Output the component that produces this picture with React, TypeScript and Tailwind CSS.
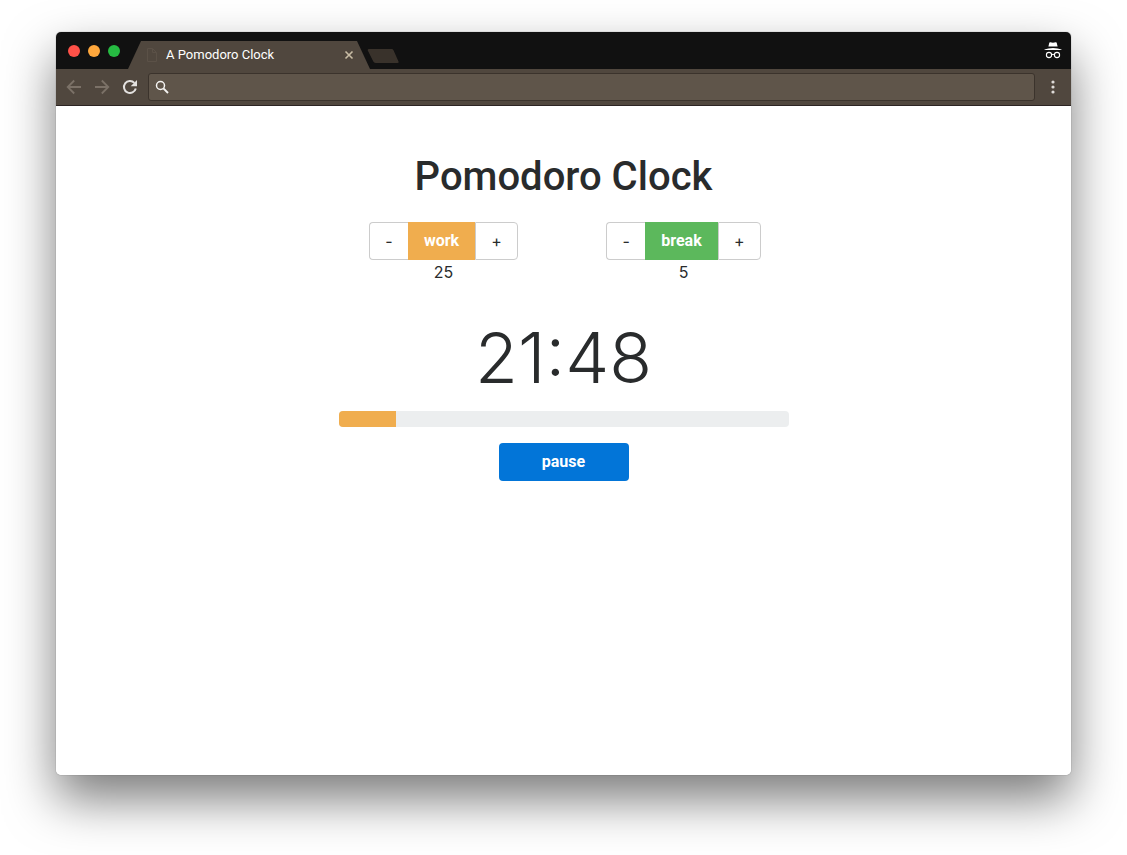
import { useState } from "react";

const font = "font-['Inter','Liberation_Sans',sans-serif]";

function TrafficLights() {
  return (
    <div className="flex h-full items-center gap-2 pl-3">
      <button aria-label="Close window" className="size-3 rounded-full bg-[#ff5148]" />
      <button aria-label="Minimize window" className="size-3 rounded-full bg-[#ffa73c]" />
      <button aria-label="Zoom window" className="size-3 rounded-full bg-[#26bb42]" />
    </div>
  );
}

function TabStrip() {
  return (
    <header className="flex h-[37px] items-end bg-[#111111] pr-2">
      <TrafficLights />
      <div className="ml-2 flex h-7 w-[242px] shrink-0 items-center bg-[#50473e] pr-4 pl-[18px] [clip-path:polygon(13px_0,229px_0,100%_100%,0_100%)]">
        <svg className="mr-2 h-[14px] w-3 shrink-0" viewBox="0 0 12 14" fill="none" stroke="#5b5147">
          <path d="M1.5 .5h5l4 4v9h-9z M6.5 .5v4h4" />
        </svg>
        <span className="flex-1 font-['Roboto',sans-serif] text-[13px] leading-4 whitespace-nowrap text-white">A Pomodoro Clock</span>
        <button aria-label="Close tab" className="flex size-[10px] items-center justify-center">
          <svg className="size-[10px]" viewBox="0 0 10 10" stroke="#c9bda5" strokeWidth="1.6">
            <path d="M1.5 1.5l7 7M8.5 1.5l-7 7" />
          </svg>
        </button>
      </div>
      <button aria-label="New tab" className="-ml-[3px] mb-[6px]">
        <svg className="h-[14px] w-8" viewBox="0 0 32 14">
          <path d="M2 0h22.5q1.5 0 2 1.2l5 11.3q.6 1.5-1 1.5H8.5q-1.5 0-2.2-1.4L.8 1.5Q.3 0 2 0z" fill="#39322b" />
        </svg>
      </button>
      <div className="flex h-full flex-1 items-center justify-end">
        <svg className="h-[18px] w-5" viewBox="0 0 20 18" fill="none">
          <path d="M6.3 .8q.2-.8 1-.6L10 .8l2.700-.6q.8-.2 1 .6l.9 3.700H5.400z" fill="#fff" />
          <path d="M1.5 7.5q3.500-1.600 8.500-1.600t8.500 1.600v.5h-17z" fill="#fff" />
          <circle cx="6" cy="13" r="2.6" stroke="#fff" strokeWidth="1.1" />
          <circle cx="14" cy="13" r="2.6" stroke="#fff" strokeWidth="1.1" />
          <path d="M8.6 12.7q1.400-1 2.800 0" stroke="#fff" strokeWidth="1.1" />
        </svg>
      </div>
    </header>
  );
}

function Toolbar() {
  return (
    <nav className="flex h-[37px] items-center border-b border-[#2c2423] bg-[#50473e] px-[10px]">
      <div className="flex items-center gap-3">
        <button aria-label="Back">
          <svg className="size-4" viewBox="0 0 16 16" fill="none" stroke="#7b7167" strokeWidth="1.8">
            <path d="M15 8H2M8.2 1.500L1.700 8l6.500 6.500" />
          </svg>
        </button>
        <button aria-label="Forward">
          <svg className="size-4" viewBox="0 0 16 16" fill="none" stroke="#7b7167" strokeWidth="1.8">
            <path d="M1 8h13M7.8 1.500L14.300 8l-6.500 6.500" />
          </svg>
        </button>
        <button aria-label="Reload">
          <svg className="size-4" viewBox="0 0 16 16" fill="none">
            <path d="M13.8 9.500A6 6 0 1 1 12.400 3.900" stroke="#e3e1df" strokeWidth="2" />
            <path d="M15 1v6.300H8.700z" fill="#e3e1df" />
          </svg>
        </button>
      </div>
      <label className="mx-[10px] flex h-7 flex-1 items-center gap-2 rounded-[3px] border border-[#3b332c] bg-[#5f554a] px-[6px]">
        <svg className="size-[14px] shrink-0" viewBox="0 0 14 14" fill="none" stroke="#f5f4f2">
          <circle cx="5.5" cy="5.5" r="4" strokeWidth="1.5" />
          <path d="M8.4 8.400l4.600 4.600" strokeWidth="1.9" />
        </svg>
        <input aria-label="Address and search" type="text" className="min-w-0 flex-1 bg-transparent text-sm text-white outline-none" />
      </label>
      <button aria-label="Menu">
        <svg className="size-4" viewBox="0 0 16 16" fill="#dedbd8">
          <circle cx="8" cy="3" r="1.6" />
          <circle cx="8" cy="8" r="1.6" />
          <circle cx="8" cy="13" r="1.6" />
        </svg>
      </button>
    </nav>
  );
}

type StepperProps = {
  label: string;
  color: string;
  value: number;
  onChange: (value: number) => void;
};

function Stepper({ label, color, value, onChange }: StepperProps) {
  return (
    <div className="flex flex-col items-center">
      <div className="flex h-[38px]">
        <button
          aria-label={`Shorten ${label}`}
          onClick={() => onChange(Math.max(1, value - 1))}
          className="w-[39px] rounded-l border border-r-0 border-[#cccccc] bg-white text-base"
        >
          -
        </button>
        <button className={`px-4 font-['Roboto',sans-serif] text-base font-bold text-white ${color}`}>{label}</button>
        <button
          aria-label={`Lengthen ${label}`}
          onClick={() => onChange(value + 1)}
          className="w-[43px] rounded-r border border-[#cccccc] bg-white text-base"
        >
          +
        </button>
      </div>
      <output className="text-base leading-6">{value}</output>
    </div>
  );
}

function PomodoroClock() {
  const [work, setWork] = useState(25);
  const [rest, setRest] = useState(5);
  const [running, setRunning] = useState(true);
  const remaining = 21 * 60 + 48;
  const total = 25 * 60;
  const elapsed = ((total - remaining) / total) * 100;

  return (
    <main className="flex flex-1 flex-col items-center bg-white px-4 pt-12 text-[#292b2c]">
      <h1 className="font-['Roboto',sans-serif] text-[40px] leading-[46px] font-medium">Pomodoro Clock</h1>
      <div className="mt-[22px] grid w-full max-w-[480px] grid-cols-2">
        <Stepper label="work" color="bg-[#f0ad4e]" value={work} onChange={setWork} />
        <Stepper label="break" color="bg-[#5cb85c]" value={rest} onChange={setRest} />
      </div>
      <time className="mt-[34px] text-[70px] leading-[80px] font-light">21:48</time>
      <div
        role="progressbar"
        aria-label="Elapsed"
        aria-valuenow={Math.round(elapsed)}
        className="mt-[13px] h-4 w-full max-w-[450px] overflow-hidden rounded bg-[#eceeef]"
      >
        <div className="h-full bg-[#f0ad4e]" style={{ width: `${elapsed}%` }} />
      </div>
      <button
        onClick={() => setRunning(!running)}
        className="mt-4 h-[38px] w-[130px] rounded bg-[#0275d8] font-['Roboto',sans-serif] text-base font-bold text-white"
      >
        {running ? "pause" : "start"}
      </button>
    </main>
  );
}

export default function App() {
  return (
    <div className={`flex min-h-screen bg-white px-14 pt-8 pb-20 ${font}`}>
      <div className="flex flex-1 flex-col rounded-[5px] shadow-[0_0_1px_rgba(0,0,0,0.6),0_24px_50px_rgba(0,0,0,0.52)]">
        <div className="flex flex-1 flex-col overflow-hidden rounded-[5px]">
          <TabStrip />
          <Toolbar />
          <PomodoroClock />
        </div>
      </div>
    </div>
  );
}
